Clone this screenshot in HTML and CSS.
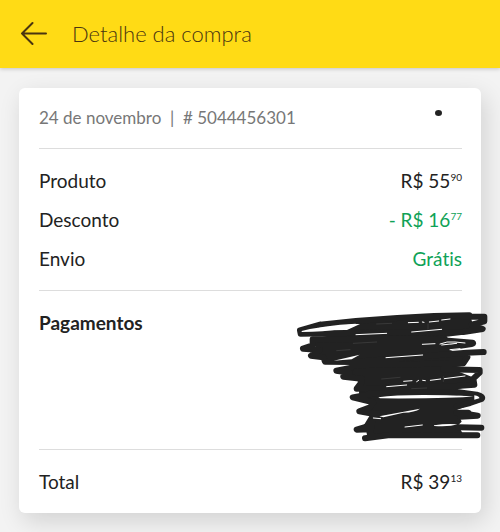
FILE: index.html
```html
<!DOCTYPE html>
<html lang="pt-BR">

<head>
  <meta charset="UTF-8">
  <meta name="viewport" content="width=device-width, initial-scale=1.0">
  <title>Detalhe da compra</title>
  <link rel="stylesheet" href="styles.css">
</head>

<body>
  <header>
    <button class="back" type="button" aria-label="Voltar">
      <svg width="28" height="24" viewBox="0 0 28 24">
        <path d="M26 12.5H2M12.5 2L2 12.5L12.5 23" />
      </svg>
    </button>
    <h1>Detalhe da compra</h1>
  </header>

  <main class="card">
    <div class="order-info">
      <p>24 de novembro &nbsp;|&nbsp; # 5044456301</p>
      <span class="dot"></span>
    </div>

    <dl class="section">
      <div class="row">
        <dt>Produto</dt>
        <dd>R$ 55<sup>90</sup></dd>
      </div>
      <div class="row">
        <dt>Desconto</dt>
        <dd class="green">- R$ 16<sup>77</sup></dd>
      </div>
      <div class="row">
        <dt>Envio</dt>
        <dd class="green">Grátis</dd>
      </div>
    </dl>

    <section class="section payments">
      <h2>Pagamentos</h2>
      <svg class="scribble" width="210" height="150" viewBox="0 0 630 450" aria-hidden="true">
        <path class="fill" d="M90 68L330 48L540 42L550 80L520 104L470 110L480 120L480 150L538 172L525 196L480 205L556 235L552 255L503 268L500 285L555 290L565 305L500 330L515 365L505 375L520 405L232 412L225 370L240 345L235 322L250 312L208 290L205 245L180 230L185 200L180 188L100 185L85 160L65 118L150 100L210 72Z" />
        <path class="stroke" d="M90 74Q330 48 538 46M520 50L583 50L583 64L545 74L578 87L520 96L210 98L32 101M30 91L90 74M30 91L32 101" />
        <path class="stroke" d="M68 118L400 116L475 122L548 128Q552 131 545 132L480 142M68 118L68 136L39 146L90 150L63 167L100 172L105 185L190 186L530 158L581 156M532 172L520 190L190 196M185 203L139 212L180 218L160 230L215 236M460 208L569 210L569 218L550 236L553 254L500 258L200 266L215 246" />
        <path class="stroke" d="M245 282L188 292L250 307L240 322L208 334L245 341L280 340M240 280L500 276L560 284Q582 290 575 297L540 309L500 319M500 338L535 338L540 343L563 347L510 350M243 370L225 381L200 389L240 388M505 382L574 383M225 415L300 405L562 406M240 400L250 350" />
        <path class="gap" d="M35 93Q100 76 197 71Q202 78 155 87Q100 96 35 96Z" />
        <path class="gap" d="M131 182Q175 172 209 164L185 178Z" />
        <path class="gap" d="M265 292Q350 280 550 289Q500 296 270 295Z" />
        <path class="gap" d="M268 349L390 326Q375 337 340 338Q305 346 280 352Z" />
        <path class="gap" d="M432 376Q470 370 502 373Q480 381 432 378Z" />
        <path class="gap" d="M553 286Q569 289 568 295L553 299Z" />
        <path class="scratch" d="M365 96L455 88M198 104L290 100M288 173L398 165M290 260L350 255M345 381L397 375M250 354L272 356M397 133L435 131M450 132Q470 123 495 126L525 129M455 135L500 130M480 149L510 146M355 68L385 67M397 66L402 67M418 66L446 63M455 60L480 57M341 244L366 242M380 245L386 241M398 241L406 242M421 241L452 237M463 236L525 228" />
        <path class="faint" d="M260 72L305 70M190 130L260 126M140 152L180 149M275 237L330 232M365 266L410 264M414 72L414 88M460 230L460 245" />
      </svg>
    </section>

    <dl class="section">
      <div class="row">
        <dt>Total</dt>
        <dd>R$ 39<sup>13</sup></dd>
      </div>
    </dl>
  </main>
</body>

</html>
```

FILE: styles.css
```css
* {
  box-sizing: border-box;
}

body {
  font-family: Lato, "Open Sans", sans-serif;
  font-size: 19px;
  line-height: 23px;
  font-variant-ligatures: none;
  margin: 0;
  background-color: #f3f3f3;
  color: #222;
}

h1,
h2,
p,
dl,
dd {
  margin: 0;
}

header {
  display: flex;
  align-items: center;
  gap: 24px;
  height: 68px;
  padding: 0 20px 2px;
  background-color: #ffdb15;
  box-shadow: 0 1px 4px rgba(0, 0, 0, 0.2);
}

h1 {
  font-size: 22px;
  font-weight: 300;
  color: #4a3510;
}

.back {
  display: flex;
  padding: 0;
  border: 0;
  background: none;
  cursor: pointer;
}

.back path {
  fill: none;
  stroke: #4a3510;
  stroke-width: 2;
  stroke-linecap: round;
  stroke-linejoin: round;
}

.card {
  margin: 20px 19px;
  padding: 0 19px 0 20px;
  border-radius: 6px;
  background-color: #fff;
  box-shadow: 4px 8px 24px rgba(0, 0, 0, 0.14);
}

.order-info {
  display: flex;
  align-items: flex-start;
  justify-content: space-between;
  height: 60px;
  padding: 18px 20px 0 0;
  font-size: 17px;
  color: #777;
}

.dot {
  width: 7px;
  height: 6px;
  margin-top: 4px;
  border-radius: 50%;
  background-color: #222;
}

.section {
  display: flex;
  flex-direction: column;
  gap: 16px;
  padding: 20px 0;
  border-top: 1px solid #ddd;
}

.row {
  display: flex;
  justify-content: space-between;
}

.green {
  color: #0fa257;
}

sup {
  font-size: 10px;
  line-height: 0;
  vertical-align: 7px;
}

h2 {
  font-size: 19px;
  font-weight: 700;
}

.payments {
  position: relative;
  min-height: 159px;
}

/* pen marks over the payment details */
.scribble {
  position: absolute;
  top: 9px;
  right: -38px;
}

.fill {
  fill: #222;
}

.stroke {
  fill: none;
  stroke: #222;
  stroke-width: 18;
  stroke-linecap: round;
  stroke-linejoin: round;
}

.gap {
  fill: #fff;
}

.scratch,
.faint {
  fill: none;
  stroke: #fff;
  stroke-width: 3;
  stroke-linecap: round;
}

.faint {
  stroke: #444;
  stroke-width: 2;
}
```
